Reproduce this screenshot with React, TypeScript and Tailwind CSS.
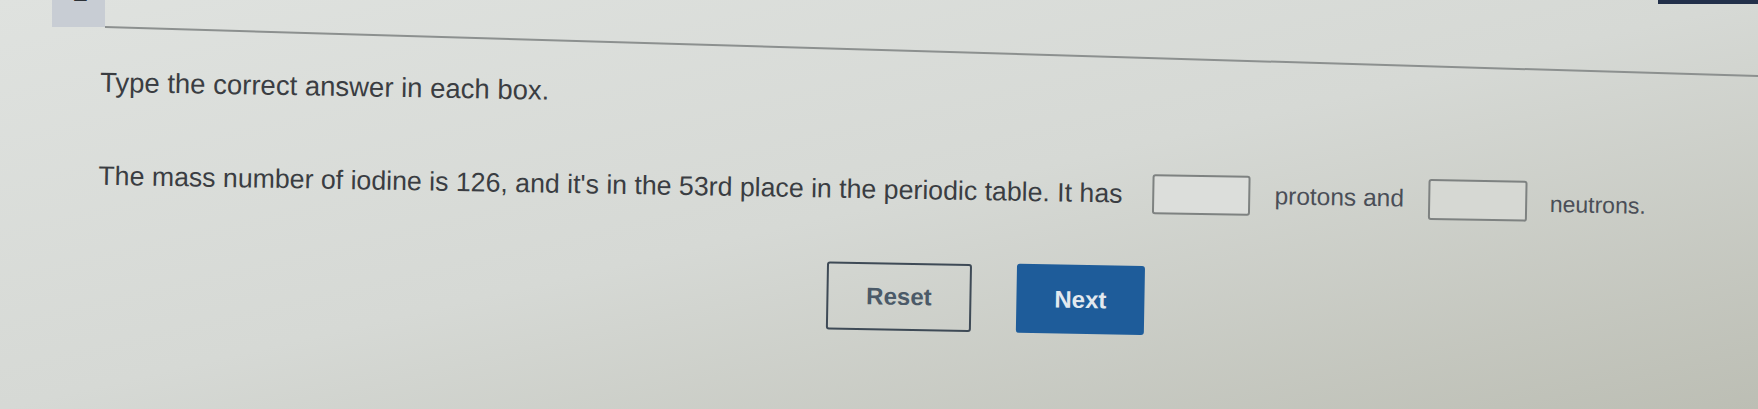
export default function App() {
  return (
    <div className="relative w-[1758px] h-[409px] overflow-hidden bg-linear-to-br from-[#dfe2df] via-[#d6d9d5] to-[#bcbeb4] font-['Liberation_Sans',Arial,sans-serif]">
      {/* screen bezel corner */}
      <div className="absolute right-0 top-0 w-[100px] h-[4px] bg-[#22304a]" />

      {/* question tab + rule */}
      <div className="flex h-[28px]">
        <div className="w-[52px] shrink-0" />
        <div className="w-[53px] h-[27px] shrink-0 bg-[#c8cdd4] overflow-hidden flex justify-center">
          <span className="-mt-[22px] pl-[4px] text-[26px] leading-[28px] font-bold text-[#2c3036]">2</span>
        </div>
        <div className="flex-1 min-w-0">
          <div className="mt-[26px] w-[1700px] h-[2px] bg-[#8c908f] origin-left rotate-[1.7deg]" />
        </div>
      </div>

      {/* question body */}
      <div className="origin-top-left rotate-[1deg] pl-[101px] text-[#3a3d42]">
        <p className="pt-[37px] text-[27.5px] leading-[31px]">Type the correct answer in each box.</p>

        <div className="mt-[56px] h-[44px] flex items-center">
          <span className="text-[26.7px] leading-[31px] whitespace-nowrap">
            The mass number of iodine is 126, and it's in the 53rd place in the periodic table. It has
          </span>
          <input
            aria-label="protons"
            className="ml-[30px] w-[98px] h-[40px] border-2 border-[#7e8281] rounded-[3px] bg-[#dcdedb] outline-none"
          />
          <span className="ml-[24px] text-[24.5px] leading-[30px] text-[#4a4e57] whitespace-nowrap">protons and</span>
          <input
            aria-label="neutrons"
            className="ml-[24px] w-[99px] h-[41px] border-2 border-[#7e8281] rounded-[3px] bg-[#d6d8d3] outline-none"
          />
          <span className="ml-[23px] mt-[6px] text-[23px] leading-[28px] text-[#4a4e57] whitespace-nowrap">neutrons.</span>
        </div>

        <div className="mt-[50px] ml-[730px] flex items-center gap-[45px]">
          <button className="w-[145px] h-[68px] border-2 border-[#3e4a56] rounded-[3px] text-[24px] font-bold text-[#4b5a68]">
            Reset
          </button>
          <button className="w-[128px] h-[69px] rounded-[3px] bg-[#1e5c9a] text-[24px] font-bold text-[#e2e9ef]">
            Next
          </button>
        </div>
      </div>
    </div>
  )
}
